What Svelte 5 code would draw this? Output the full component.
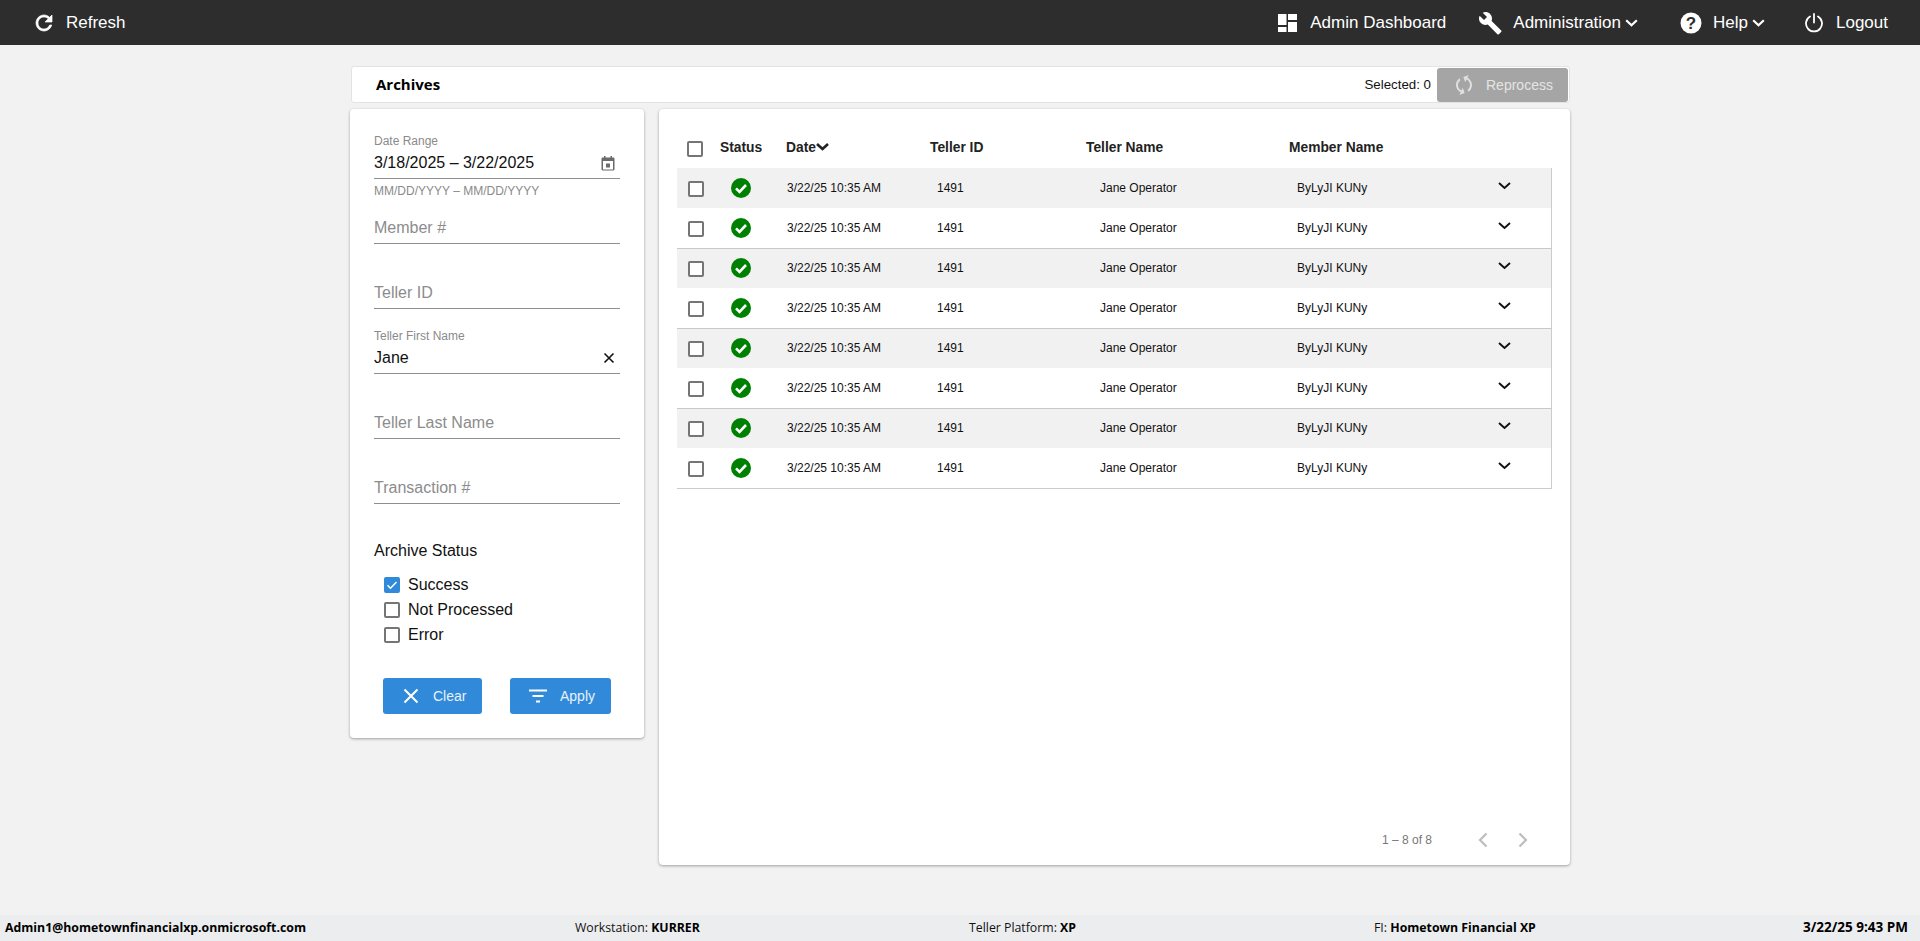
<script>
  const rows = Array.from({ length: 8 }, (_, i) => i);
</script>

<div class="app">
  <header class="topbar">
    <button class="nav first">
      <svg class="refresh" width="24" height="24" viewBox="0 0 24 24"><path fill="#fff" stroke="#fff" stroke-width=".7" d="M17.65 6.35C16.2 4.9 14.21 4 12 4c-4.42 0-7.99 3.58-7.99 8s3.57 8 7.99 8c3.73 0 6.84-2.55 7.73-6h-2.08c-.82 2.33-3.04 4-5.65 4-3.31 0-6-2.69-6-6s2.69-6 6-6c1.66 0 3.14.69 4.22 1.78L13 11h7V4l-2.35 2.35z"/></svg>
      <span>Refresh</span>
    </button>
    <div class="spacer"></div>
    <button class="nav dash">
      <svg width="19" height="18" viewBox="0 0 19 18"><path fill="#fff" d="M0 0h8.500v11H0zM0 13h8.500v5H0zM10 0h9v6h-9zM10 8h9v10h-9z"/></svg>
      <span>Admin Dashboard</span>
    </button>
    <button class="nav admin">
      <svg width="24" height="24" viewBox="0 0 24 24"><path fill="#fff" d="M23.2 19.600 13.600 9.900c.9-2.300.4-5-1.500-6.900-2-2-5-2.400-7.400-1.300L9 6 6 9 1.600 4.700C.4 7.100.9 10.100 2.900 12.100c1.900 1.900 4.600 2.400 6.900 1.500l9.600 9.600c.4.400 1 .4 1.400 0l2.300-2.200c.5-.5.500-1.100.1-1.400z"/></svg>
      <span>Administration</span>
      <svg class="caret" width="13" height="8" viewBox="0 0 13 8"><path fill="none" stroke="#fff" stroke-width="2.200" d="M1.200 1.200 6.500 6.200l5.300-5"/></svg>
    </button>
    <button class="nav help">
      <svg width="22" height="22" viewBox="0 0 22 22"><circle cx="11" cy="11" r="10.500" fill="#fff"/><text x="11" y="17" text-anchor="middle" class="q">?</text></svg>
      <span>Help</span>
      <svg class="caret" width="13" height="8" viewBox="0 0 13 8"><path fill="none" stroke="#fff" stroke-width="2.200" d="M1.200 1.200 6.500 6.200l5.300-5"/></svg>
    </button>
    <button class="nav logout">
      <svg width="18" height="20" viewBox="0 0 18 20"><path fill="none" stroke="#fff" stroke-width="1.800" stroke-linecap="round" d="M5 3.500a8 8 0 1 0 8 0M9 1v8.500"/></svg>
      <span>Logout</span>
    </button>
  </header>

  <main class="page">
    <section class="titlebar">
      <h1>Archives</h1>
      <span class="selected">Selected: 0</span>
      <button class="reprocess">
        <svg width="24" height="24" viewBox="0 0 24 24"><path transform="rotate(25 12 12)" fill="#e0e0e0" d="M12 4V1L8 5l4 4V6c3.310 0 6 2.690 6 6 0 1.010-.25 1.970-.7 2.800l1.460 1.460C19.540 15.030 20 13.570 20 12c0-4.420-3.580-8-8-8zm0 14c-3.310 0-6-2.690-6-6 0-1.010.25-1.970.7-2.800L5.240 7.740C4.460 8.970 4 10.430 4 12c0 4.420 3.580 8 8 8v3l4-4-4-4v3z"/></svg>
        <span>Reprocess</span>
      </button>
    </section>

    <div class="columns">
      <aside class="filters">
        <div class="field">
          <div class="label">Date Range</div>
          <div class="value"><span>3/18/2025 – 3/22/2025</span>
            <svg width="14" height="15" viewBox="0 0 14 15"><path fill="#6b6b6b" d="M3 0h1.500v1.500h5V0H11v1.500h1.300c.7 0 1.200.6 1.200 1.200v10.600c0 .7-.5 1.200-1.200 1.200H1.700c-.7 0-1.200-.5-1.200-1.200V2.700c0-.6.500-1.200 1.200-1.200H3zM2 5v8.500h10V5zm3 2.500h4v4H5z"/></svg>
          </div>
          <div class="hint">MM/DD/YYYY – MM/DD/YYYY</div>
        </div>
        <div class="field"><div class="label"></div><div class="value ph">Member #</div></div>
        <div class="field"><div class="label"></div><div class="value ph">Teller ID</div></div>
        <div class="field">
          <div class="label">Teller First Name</div>
          <div class="value"><span>Jane</span>
            <svg width="12" height="12" viewBox="0 0 12 12"><path stroke="#111" stroke-width="1.600" d="M1.500 1.500l9 9M10.500 1.500l-9 9"/></svg>
          </div>
        </div>
        <div class="field"><div class="label"></div><div class="value ph">Teller Last Name</div></div>
        <div class="field"><div class="label"></div><div class="value ph">Transaction #</div></div>

        <div class="status-title">Archive Status</div>
        <div class="checks">
          <div class="check"><span class="box on"><svg width="16" height="16" viewBox="0 0 16 16"><path fill="none" stroke="#fff" stroke-width="1.500" d="M3.500 8.300 6.500 11.300 12.500 5"/></svg></span>Success</div>
          <div class="check"><span class="box"></span>Not Processed</div>
          <div class="check"><span class="box"></span>Error</div>
        </div>
        <div class="actions">
          <button class="btn clear">
            <svg width="16" height="16" viewBox="0 0 16 16"><path stroke="#fff" stroke-width="2" d="M1.500 1.500l13 13M14.500 1.500l-13 13"/></svg>
            <span>Clear</span>
          </button>
          <button class="btn apply">
            <svg width="20" height="14" viewBox="0 0 20 14"><path stroke="#fff" stroke-width="2" d="M1 1.500h18M4.500 7h11M8 12.500h4"/></svg>
            <span>Apply</span>
          </button>
        </div>
      </aside>

      <section class="results">
        <div class="thead grid">
          <span class="cb-cell hd"><span class="box"></span></span>
          <span class="th">Status</span>
          <span class="th date">Date<svg width="13" height="8" viewBox="0 0 13 8"><path fill="none" stroke="#222" stroke-width="2.600" d="M1 1l5.500 5L12 1"/></svg></span>
          <span class="th">Teller ID</span>
          <span class="th">Teller Name</span>
          <span class="th">Member Name</span>
          <span></span>
        </div>
        <div class="tbody">
          {#each rows as r}
            <div class="row grid" class:odd={r % 2 === 0} class:sep={r % 2 === 0 && r > 0}>
              <span class="cb-cell"><span class="box"></span></span>
              <span class="ok"><svg width="20" height="20" viewBox="0 0 20 20"><circle cx="10" cy="10" r="10" fill="#008000"/><path fill="none" stroke="#fff" stroke-width="2.600" d="M5 10.300 8.500 13.800 15 7"/></svg></span>
              <span class="td d">3/22/25 10:35 AM</span>
              <span class="td t">1491</span>
              <span class="td n">Jane Operator</span>
              <span class="td m">ByLyJI KUNy</span>
              <span class="exp"><svg width="13" height="8" viewBox="0 0 13 8"><path fill="none" stroke="#111" stroke-width="1.900" d="M1 1l5.500 5L12 1"/></svg></span>
            </div>
          {/each}
        </div>
        <div class="pager">
          <span>1 – 8 of 8</span>
          <svg class="prev" width="12" height="16" viewBox="0 0 12 16"><path fill="none" stroke="#bdbdbd" stroke-width="2.200" d="M9.500 1.500 3 8l6.500 6.500"/></svg>
          <svg class="next" width="12" height="16" viewBox="0 0 12 16"><path fill="none" stroke="#bdbdbd" stroke-width="2.200" d="M2.500 1.500 9 8l-6.500 6.500"/></svg>
        </div>
      </section>
    </div>
  </main>

  <footer class="footer">
    <b class="f1">Admin1@hometownfinancialxp.onmicrosoft.com</b>
    <span class="f2">Workstation: <b>KURRER</b></span>
    <span class="f3">Teller Platform: <b>XP</b></span>
    <span class="f4">FI: <b>Hometown Financial XP</b></span>
    <b class="f5">3/22/25 9:43 PM</b>
  </footer>
</div>

<style>
  :global(body) { margin: 0; background: #f2f2f2; }
  .app { height: 941px; display: flex; flex-direction: column; font-family: "Liberation Sans", Arial, sans-serif; overflow: hidden; }
  button { font: inherit; border: 0; background: none; padding: 0; }

  .topbar { height: 45px; background: #2d2d2d; display: flex; align-items: center; color: #fff; flex: none; }
  .spacer { flex: 1; }
  .nav { display: flex; align-items: center; color: #fff; font-size: 17px; }
  .nav svg { display: block; }
  .first { margin-left: 32px; gap: 10px; }
  .dash { gap: 13px; }
  .admin { margin-left: 32px; gap: 11px; }
  .help { margin-left: 42px; gap: 11px; }
  .logout { margin-left: 40px; margin-right: 32px; gap: 13px; }
  .nav .caret { margin-left: -7px; }
  .q { font: bold 17px "Liberation Sans", sans-serif; fill: #2d2d2d; }

  .page { flex: 1; padding: 21px 0 0 350px; width: 1220px; box-sizing: content-box; }
  .titlebar { margin-left: 1px; height: 37px; box-sizing: border-box; background: #fff; border: 1px solid #e3e3e3; border-radius: 3px; display: flex; align-items: center; padding: 0 1px 0 24px; }
  h1 { margin: 0 0 1px; flex: 1; font: 700 15px "Open Sans", sans-serif; color: #000; }
  .selected { font-size: 13.300px; color: #111; margin-right: 6px; }
  .reprocess { width: 131px; height: 34px; background: #a5a5a5; border-radius: 3px; color: #e4e4e4; font-size: 14px; display: flex; align-items: center; gap: 10px; padding-left: 15px; box-sizing: border-box; }
  .reprocess svg { display: block; }

  .columns { display: flex; gap: 15px; margin-top: 6px; }
  .filters { width: 294px; height: 629px; box-sizing: border-box; background: #fff; border-radius: 4px; box-shadow: 0 1px 3px rgba(0,0,0,.35); padding: 25px 24px 0; flex: none; }
  .field { height: 65px; }
  .label { height: 14px; font-size: 12px; line-height: 14px; color: #8a8a8a; }
  .value { height: 30px; font-size: 16px; line-height: 30px; display: flex; align-items: center; justify-content: space-between; border-bottom: 1px solid #8f8f8f; padding-right: 5px; color: #111; }
  .value svg { display: block; }
  .value.ph { color: #8c8c8c; }
  .hint { font-size: 12px; line-height: 14px; color: #8a8a8a; margin-top: 5px; }

  .status-title { font-size: 16px; margin-top: 17px; line-height: 20px; color: #111; }
  .checks { margin: 11px 0 0 10px; }
  .check { display: flex; align-items: center; gap: 8px; font-size: 16px; height: 25px; color: #111; }
  .box { display: block; width: 16px; height: 16px; box-sizing: border-box; border: 2px solid #757575; border-radius: 2px; background: #fff; }
  .box.on { background: #318ad9; border: 0; }
  .box.on svg { display: block; }
  .actions { display: flex; margin-top: 31px; padding-left: 9px; gap: 28px; }
  .btn { height: 36px; background: #318ad9; border-radius: 3px; color: #e8f1fa; font: 14px "Liberation Sans", sans-serif; display: flex; align-items: center; box-sizing: border-box; }
  .clear { width: 99px; padding-left: 20px; gap: 14px; }
  .apply { width: 101px; padding-left: 18px; gap: 12px; }

  .results { width: 911px; height: 756px; box-sizing: border-box; background: #fff; border-radius: 4px; box-shadow: 0 1px 3px rgba(0,0,0,.35); padding: 21px 18px 0 18px; display: flex; flex-direction: column; flex: none; }
  .grid { display: grid; grid-template-columns: 43px 66px 144px 156px 203px 1fr 53px; align-items: center; width: 875px; box-sizing: border-box; }
  .thead { height: 38px; }
  .th { font-size: 13.800px; font-weight: 700; color: #222; padding-bottom: 4px; }
  .date { display: flex; align-items: center; }
  .cb-cell { display: flex; padding-left: 11px; padding-top: 1px; }
  .cb-cell.hd { padding-left: 10px; padding-top: 0; }
  .tbody { border-right: 1px solid #ccc; border-bottom: 1px solid #ccc; width: 875px; box-sizing: border-box; }
  .row { height: 40px; width: 874px; }
  .row.odd { background: #f1f1f1; }
  .row.sep { box-shadow: inset 0 1px 0 #c8c8c8; }
  .ok { display: flex; padding-left: 11px; }
  .ok svg { display: block; }
  .td { font-size: 12px; color: #111; }
  .d { padding-left: 1px; }
  .t { padding-left: 7px; }
  .n { padding-left: 14px; }
  .m { padding-left: 8px; }
  .exp { display: flex; padding-bottom: 5px; }
  .exp svg { display: block; }

  .pager { margin-top: auto; margin-bottom: 17px; display: flex; align-items: center; justify-content: flex-end; font: 12px "Liberation Sans", sans-serif; color: #777; padding-right: 23px; }
  .prev { margin-left: 45px; }
  .next { margin-left: 28px; }

  .footer { flex: none; height: 26px; background: #ecedef; font: 12.300px "Open Sans", sans-serif; color: #111; position: relative; }
  .footer b { color: #000; }
  .footer > * { position: absolute; top: 4px; }
  .f1 { left: 5px; } .f2 { left: 575px; } .f3 { left: 969px; } .f4 { left: 1374px; }
  .f5 { right: 12px; font-size: 13.500px; top: 3px; }
</style>
